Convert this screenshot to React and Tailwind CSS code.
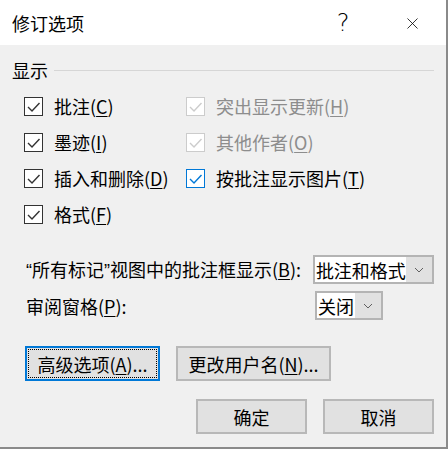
import { X } from "lucide-react";

const LEFT = [
  { label: "批注", key: "C" },
  { label: "墨迹", key: "I" },
  { label: "插入和删除", key: "D" },
  { label: "格式", key: "F" },
];

const RIGHT = [
  { label: "突出显示更新", key: "H", disabled: true },
  { label: "其他作者", key: "O", disabled: true },
  { label: "按批注显示图片", key: "T", blue: true },
];

const Check = ({ color }) => (
  <svg width="17" height="17" viewBox="0 0 17 17" fill="none">
    <path d="M3 9l4 4 7.5-8" stroke={color} strokeWidth="1.4" />
  </svg>
);

const CheckRow = ({ item }) => {
  const box = item.disabled
    ? "border-[#cccccc]"
    : item.blue
    ? "border-[#0078d7]"
    : "border-[#333333]";
  const tick = item.disabled ? "#cccccc" : item.blue ? "#0078d7" : "#333333";
  return (
    <div className="flex items-center h-[36px]">
      <span
        className={`w-[19px] h-[19px] border bg-white flex items-center justify-center ${box}`}
      >
        <Check color={tick} />
      </span>
      <span
        className={`ml-[11px] ${item.disabled ? "text-[#8d8d8d]" : "text-black"}`}
      >
        {item.label}(<span className="underline underline-offset-2">{item.key}</span>)
      </span>
    </div>
  );
};

const Chevron = () => (
  <svg width="10" height="6" viewBox="0 0 10 6" fill="none">
    <path d="M1 1l4 4 4-4" stroke="#606060" strokeWidth="1" />
  </svg>
);

const Select = ({ value, width }) => (
  <div
    className={`flex h-[29px] border-2 border-[#b4b4b4] bg-white ${width}`}
  >
    <span className="flex-1 pl-[1px] flex items-center leading-none overflow-hidden whitespace-nowrap">
      {value}
    </span>
    <span className="w-[26px] bg-[#e1e1e1] flex items-center justify-center">
      <Chevron />
    </span>
  </div>
);

const Button = ({ children, width, focused }) => (
  <button
    className={`h-[35px] ${width} bg-[#e1e1e1] flex items-center justify-center ${
      focused
        ? "border-2 border-[#0078d7] outline-1 outline-dotted outline-black outline-offset-[-4px]"
        : "border-2 border-[#b8b8b8]"
    }`}
  >
    {children}
  </button>
);

const App = () => {
  return (
    <div className="w-[448px] h-[449px] bg-[#f0f0f0] border-r-2 border-b-2 border-[#8a8a8a] text-[18px] leading-none text-black font-['Noto_Sans_CJK_SC','Noto_Sans',sans-serif] overflow-hidden">
      <header className="h-[45px] bg-white flex items-center pl-3">
        <span className="flex-1">修订选项</span>
        <span className="w-[20px] text-center text-[24px] text-black font-['DejaVu_Sans',sans-serif] font-extralight mr-[50px]">
          ?
        </span>
        <X size={19} strokeWidth={1} className="mr-[24px] mt-[1px]" />
      </header>

      <div className="px-3">
        <div className="flex items-center h-[28px] mt-[11px]">
          <span>显示</span>
          <span className="flex-1 h-px bg-[#d6d6d6] ml-[6px]" />
        </div>

        <div className="flex pl-3 mt-[4px]">
          <div className="w-[162px]">
            {LEFT.map((item) => (
              <CheckRow key={item.key} item={item} />
            ))}
          </div>
          <div>
            {RIGHT.map((item) => (
              <CheckRow key={item.key} item={item} />
            ))}
          </div>
        </div>

        <div className="pl-[14px] mt-[23px] flex flex-col gap-[7px]">
          <div className="flex items-center">
            <span className="w-[289px] whitespace-nowrap">
              <span className="font-['Liberation_Sans',sans-serif]">“</span>
              所有标记
              <span className="font-['Liberation_Sans',sans-serif]">”</span>
              视图中的批注框显示(<span className="underline underline-offset-2">B</span>):
            </span>
            <Select value="批注和格式" width="w-[122px]" />
          </div>
          <div className="flex items-center">
            <span className="w-[289px]">
              审阅窗格(<span className="underline underline-offset-2">P</span>):
            </span>
            <Select value="关闭" width="w-[68px]" />
          </div>
        </div>

        <div className="pl-[13px] mt-[26px] flex gap-4">
          <Button width="w-[135px]" focused>
            高级选项(<span className="underline underline-offset-2">A</span>)...
          </Button>
          <Button width="w-[155px]">
            更改用户名(<span className="underline underline-offset-2">N</span>)...
          </Button>
        </div>

        <div className="mt-[18px] flex justify-end gap-4">
          <Button width="w-[111px]">确定</Button>
          <Button width="w-[111px]">取消</Button>
        </div>
      </div>
    </div>
  );
};

export default App;
